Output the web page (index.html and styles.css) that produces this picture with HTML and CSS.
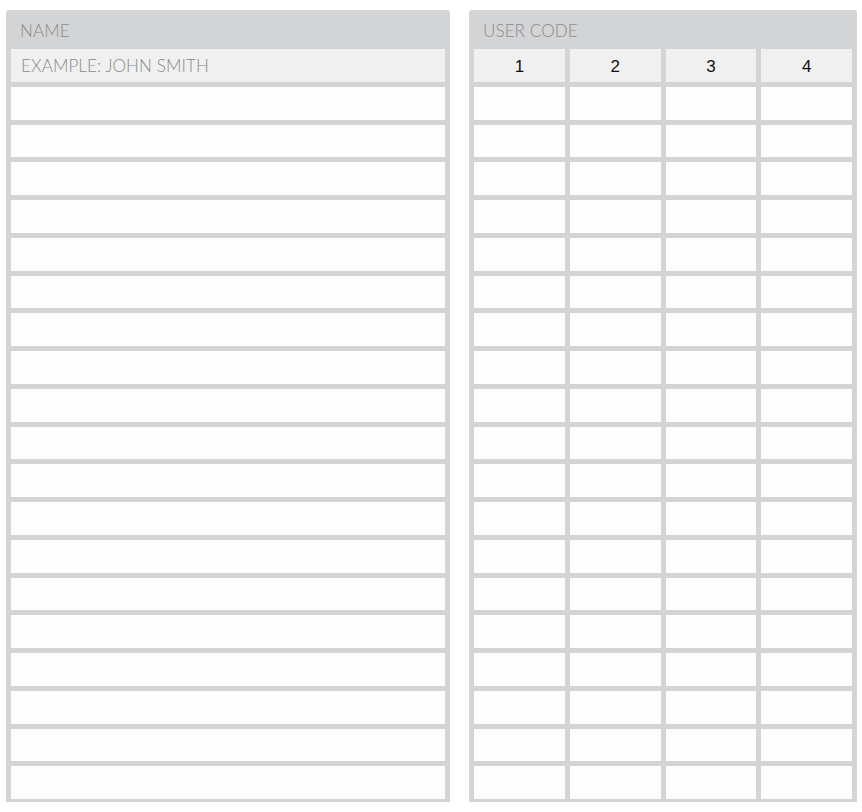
FILE: index.html
```html
<!DOCTYPE html>
<html>
<head>
<meta charset="utf-8">
<link rel="stylesheet" href="styles.css">
</head>
<body>
<div class="sheet">
  <section class="panel panel-name">
    <div class="panel-head">NAME</div>
    <div class="grid grid-1">
      <div class="cell example">EXAMPLE: JOHN SMITH</div>
      <div class="cell"></div><div class="cell"></div><div class="cell"></div><div class="cell"></div>
      <div class="cell"></div><div class="cell"></div><div class="cell"></div><div class="cell"></div>
      <div class="cell"></div><div class="cell"></div><div class="cell"></div><div class="cell"></div>
      <div class="cell"></div><div class="cell"></div><div class="cell"></div><div class="cell"></div>
      <div class="cell"></div><div class="cell"></div><div class="cell"></div>
    </div>
  </section>
  <section class="panel panel-code">
    <div class="panel-head">USER CODE</div>
    <div class="grid grid-4" id="codes">
      <div class="cell num">1</div><div class="cell num">2</div><div class="cell num">3</div><div class="cell num">4</div>
    </div>
  </section>
</div>
<script>
  var g = document.getElementById('codes');
  for (var i = 0; i < 19 * 4; i++) {
    var d = document.createElement('div');
    d.className = 'cell';
    g.appendChild(d);
  }
</script>
</body>
</html>
```

FILE: styles.css
```css
html, body {
  margin: 0;
  padding: 0;
  background: #ffffff;
}

.sheet {
  display: flex;
  gap: 19px;
  padding: 10px 0 0 6px;
}

.panel {
  background: #d3d4d5;
  border-radius: 3px 3px 0 0;
  padding: 0 5px 3px 5px;
  box-sizing: border-box;
}

.panel-name { width: 444px; }
.panel-code { width: 388px; }

.panel-head {
  height: 39px;
  display: flex;
  align-items: center;
  padding-left: 9px;
  padding-top: 1px;
  box-sizing: border-box;
  font-family: Lato, "Open Sans", sans-serif;
  font-weight: 300;
  font-size: 17px;
  color: #8a8b8c;
  letter-spacing: 0.1px;
}

.grid {
  display: grid;
  grid-template-rows: repeat(20, 1fr);
  gap: 5px;
  height: 750px;
}

.grid-1 { grid-template-columns: 1fr; }
.grid-4 { grid-template-columns: repeat(4, 1fr); }

.cell {
  background: #fefefe;
}

.cell.example {
  background: #f0f0f0;
  display: flex;
  align-items: center;
  padding-left: 10px;
  padding-top: 1px;
  font-family: Lato, "Open Sans", sans-serif;
  font-weight: 300;
  font-size: 17px;
  color: #8a8b8c;
  letter-spacing: 0.1px;
}

.cell.num {
  background: #f0f0f0;
  display: flex;
  align-items: center;
  justify-content: center;
  padding-top: 3px;
  font-family: "Liberation Sans", Arial, sans-serif;
  font-size: 17px;
  color: #111111;
}
```
